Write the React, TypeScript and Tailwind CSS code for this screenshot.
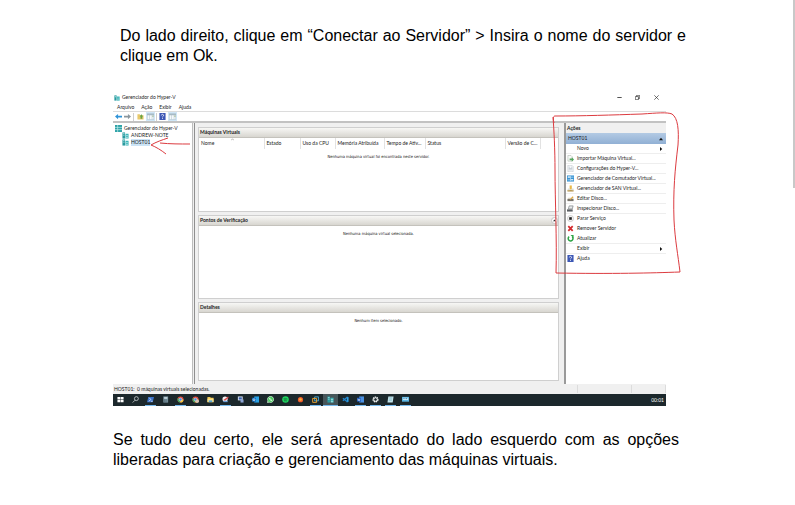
import type { ReactNode } from "react";

function Icon({ size = "size-[7px]", children }: { size?: string; children: ReactNode }) {
  return (
    <svg viewBox="0 0 16 16" className={`${size} shrink-0`} aria-hidden="true">
      {children}
    </svg>
  );
}

const server = (
  <>
    <path d="M1 1h6v14H1z" fill="#2a9a9f" />
    <path d="M8 4h7v11H8z" fill="#3db5b8" />
    <path d="M2 3h4v2H2zM2 7h4v1H2zM9 7h2v2H9zM12 7h2v2h-2zM9 11h2v3H9zM12 11h2v3h-2z" fill="#a5dfe0" />
  </>
);

const help = (
  <>
    <path d="M1 0h14v16H1z" fill="#3c57b5" />
    <path d="M5.500 5.500a2.500 2.500 0 1 1 3.500 2.300c-.8.500-1 .8-1 2M8 11.500v2" fill="none" stroke="#fff" strokeWidth="1.800" />
  </>
);

const panelIcon = (
  <>
    <path d="M0 1h16v14H0z" fill="#a7bac5" />
    <path d="M1 5h4v9H1zM6 5h5v9H6zM12 5h3v9h-3z" fill="#f5f9fb" />
    <path d="M12 6h3v2h-3z" fill="#7fa55d" />
  </>
);

type Action = { label: string; icon?: ReactNode; submenu?: boolean; line?: boolean };

const actions: Action[] = [
  { label: "Novo", submenu: true, line: true },
  {
    label: "Importar Máquina Virtual...",
    line: true,
    icon: (
      <>
        <path d="M2 1h7l3 3v10H2z" fill="#f8f9f8" stroke="#93a396" />
        <path d="M6 8h5V5l5 5.500-5 5V12H6z" fill="#53a45d" />
      </>
    ),
  },
  {
    label: "Configurações do Hyper-V...",
    line: true,
    icon: (
      <>
        <path d="M2 .5h9l3 3v12H2z" fill="#fafbfc" stroke="#a4acb5" />
        <path d="M4 5h3M9 5h3M4 8h8M4 11h8" stroke="#8797aa" />
      </>
    ),
  },
  {
    label: "Gerenciador de Comutador Virtual...",
    line: true,
    icon: (
      <>
        <path d="M0 1h16v14H0z" fill="#3a94d3" />
        <path d="M1 5h14M1 11h14M8 2v12" stroke="#c5e4f6" strokeWidth="1.500" />
        <path d="M3 3h3v3H3zM10 9h3v3h-3z" fill="#fff" />
      </>
    ),
  },
  {
    label: "Gerenciador de SAN Virtual...",
    line: true,
    icon: (
      <>
        <path d="M6 1h5v9H6z" fill="#e9b94a" />
        <path d="M1 11h14v4H1z" fill="#b99a55" />
        <path d="M2 8h4v4H2zM11 8h4v4h-4z" fill="#d9ddd9" />
      </>
    ),
  },
  {
    label: "Editar Disco...",
    line: true,
    icon: (
      <>
        <path d="M1 9h14v5H1z" fill="#77736b" />
        <path d="M3 6h11l1 3H1z" fill="#d9d2c0" />
        <path d="M6 10l7-7 2 2-7 6z" fill="#e0a73b" />
      </>
    ),
  },
  {
    label: "Inspecionar Disco...",
    line: true,
    icon: (
      <>
        <path d="M0 10h13v5H0z" fill="#595d61" />
        <path d="M5 2h9l-2 7H3z" fill="#e7eaec" stroke="#73787c" strokeWidth="1.500" />
      </>
    ),
  },
  {
    label: "Parar Serviço",
    icon: (
      <>
        <circle cx="8" cy="8" r="7" fill="#f4f4f4" stroke="#a0a0a0" />
        <path d="M5 5h6v6H5z" fill="#222" />
      </>
    ),
  },
  { label: "Remover Servidor", icon: <path d="M3 2.500l10 11M13 2.500l-10 11" stroke="#d42a2e" strokeWidth="4" /> },
  {
    label: "Atualizar",
    line: true,
    icon: (
      <>
        <path d="M5 3.500a5.500 5.500 0 1 0 7 .5" fill="none" stroke="#2ba343" strokeWidth="3.500" />
        <path d="M8 0h7v7z" fill="#2ba343" />
      </>
    ),
  },
  { label: "Exibir", submenu: true, line: true },
  { label: "Ajuda", icon: help },
];

type Task = { label: string; open?: boolean; active?: boolean; icon: ReactNode };

const chrome = (
  <>
    <circle cx="8" cy="8" r="7" fill="#dd4b3e" />
    <path d="M8 8L2 4.500A7 7 0 0 0 7.500 15z" fill="#3da75a" />
    <path d="M8 8h7a7 7 0 0 1-7.500 7z" fill="#f3c63b" />
    <circle cx="8" cy="8" r="3.300" fill="#4a86e0" stroke="#fff" />
  </>
);

const tasks: Task[] = [
  { label: "Iniciar", icon: <path d="M1 2h6v5.500H1zM8 2h7v5.500H8zM1 8.500h6V14H1zM8 8.500h7V14H8z" fill="#fff" /> },
  {
    label: "Pesquisar",
    icon: (
      <g fill="none" stroke="#e3e8e9" strokeWidth="1.600">
        <circle cx="10" cy="6" r="4.500" />
        <path d="M7 9.500L1.500 15" />
      </g>
    ),
  },
  {
    label: "PowerShell",
    open: true,
    icon: (
      <>
        <path d="M3 2h13l-3 12H0z" fill="#3b72c8" />
        <path d="M5 4l4 4-5 4M9 12h4" fill="none" stroke="#fff" strokeWidth="1.500" />
      </>
    ),
  },
  {
    label: "Calculadora",
    icon: (
      <>
        <path d="M3 1h11v14H3z" fill="#7e98a5" />
        <path d="M5 3h7v3H5z" fill="#d9e4e9" />
        <path d="M5 9h7M5 12h7" stroke="#33464f" strokeDasharray="2 1" strokeWidth="1.500" />
      </>
    ),
  },
  { label: "Chrome", open: true, icon: chrome },
  {
    label: "Chrome, perfil 2",
    icon: (
      <>
        {chrome}
        <circle cx="12" cy="12" r="4" fill="#d7c3b5" />
      </>
    ),
  },
  {
    label: "Explorador de Arquivos",
    icon: (
      <>
        <path d="M1 2h6l2 2h6v10H1z" fill="#efc64f" />
        <path d="M1 6h14v8H1z" fill="#fbe28d" />
        <path d="M4 10h8v4H4z" fill="#57a5d7" />
      </>
    ),
  },
  {
    label: "Captura",
    open: true,
    icon: (
      <>
        <circle cx="7" cy="7" r="6" fill="#f1f1f2" />
        <path d="M3 9l11-8 1 3-8 7z" fill="#dc4b4b" />
        <path d="M3 11h10v3H3z" fill="#6aa1d9" />
      </>
    ),
  },
  {
    label: "Área de Trabalho Remota",
    icon: (
      <>
        <path d="M2 1h11v9H2z" fill="#dce6f5" />
        <path d="M4 3h7v5H4z" fill="#395fae" />
        <path d="M8 8h7v7H8z" fill="#8da5d5" />
      </>
    ),
  },
  {
    label: "Outlook",
    icon: (
      <>
        <path d="M5 1h11v14H5z" fill="#29a2e5" />
        <path d="M0 4h9v9H0z" fill="#1268b8" />
        <circle cx="4.500" cy="8.500" r="2.200" fill="none" stroke="#fff" strokeWidth="1.500" />
      </>
    ),
  },
  {
    label: "WhatsApp",
    icon: (
      <>
        <path d="M1 15l1-4a7 7 0 1 1 3 3z" fill="#4bc95f" stroke="#e7f7e9" strokeWidth="1.500" />
        <path d="M5 5c0 3 3 6 6 6l1-2-2-1-1 1-2-2 1-1-1-2z" fill="#fff" />
      </>
    ),
  },
  {
    label: "Spotify",
    icon: (
      <>
        <circle cx="8" cy="8" r="7.500" fill="#1ed760" />
        <path d="M3.500 6c3-1 6-.6 9 1M4 8.700c3-.8 5-.4 7.500 1M4.500 11c2-.5 4-.3 6 .8" fill="none" stroke="#123c22" strokeWidth="1.200" />
      </>
    ),
  },
  {
    label: "Firefox",
    icon: (
      <>
        <circle cx="8" cy="8.500" r="6" fill="#ee5b2c" />
        <circle cx="8" cy="8" r="3" fill="#f9b93b" />
      </>
    ),
  },
  {
    label: "VMware",
    open: true,
    icon: (
      <g fill="none" strokeWidth="2.200">
        <path d="M6 2h9v9H6z" stroke="#45a3cf" />
        <path d="M1.500 5.500h9v9h-9z" stroke="#e4a234" />
      </g>
    ),
  },
  { label: "Gerenciador do Hyper-V", open: true, active: true, icon: server },
  {
    label: "Visual Studio Code",
    icon: (
      <>
        <path d="M11 1l4 2v10l-4 2z" fill="#2c9fe6" />
        <path d="M12 3L2 11M12 13L2 5" stroke="#2383c9" strokeWidth="3" />
      </>
    ),
  },
  {
    label: "Word",
    open: true,
    icon: (
      <>
        <path d="M5 1h11v14H5z" fill="#4b91e2" />
        <path d="M0 4h9v9H0z" fill="#1b57b5" />
        <path d="M2 6l1 5 1.500-4L6 11l1-5" fill="none" stroke="#fff" />
      </>
    ),
  },
  {
    label: "Configurações",
    open: true,
    icon: (
      <>
        <circle cx="8" cy="8" r="5.500" fill="none" stroke="#f0f3f3" strokeWidth="3" strokeDasharray="3 1.300" />
        <circle cx="8" cy="8" r="4" fill="none" stroke="#f0f3f3" strokeWidth="2" />
      </>
    ),
  },
  {
    label: "Bloco de Notas",
    open: true,
    icon: (
      <>
        <path d="M3 1h12l-2 14H1z" fill="#c3e3ea" />
        <path d="M5 4h7M4.500 7h7M4 10h7" stroke="#6ba7b7" />
      </>
    ),
  },
  {
    label: "Conexão",
    open: true,
    icon: (
      <>
        <path d="M0 2h16v11H0z" fill="#5bb5e3" />
        <path d="M2 4h12v5H2z" fill="#d8f0fb" />
        <path d="M3 6h3M8 6h4" stroke="#2775a6" strokeWidth="2" />
      </>
    ),
  },
];

const emptyText = "text-center font-['DejaVu_Sans_Condensed','Liberation_Sans',sans-serif] text-[4px] text-[#111]";

function Group({ title, size, collapse, children }: { title: string; size: string; collapse?: boolean; children: ReactNode }) {
  return (
    <section className={`${size} flex grow flex-col border border-[#cfcfcf] bg-white`}>
      <div className="flex h-[10px] items-center justify-between border-b border-[#c4c2bc] bg-linear-to-b from-[#f7f7f5] to-[#d8d6d0] pl-px">
        <h2 className="font-bold text-[#222]">{title}</h2>
        {collapse && (
          <button aria-label="Recolher" className="flex size-[7px] items-center justify-center rounded-full border border-[#c5c5c5] bg-white">
            <Icon size="size-[3px]">
              <path d="M0 12l8-9 8 9z" fill="#333" />
            </Icon>
          </button>
        )}
      </div>
      {children}
    </section>
  );
}

const columns = [
  { label: "Nome", width: "w-[65px]", sorted: true },
  { label: "Estado", width: "w-[36px]" },
  { label: "Uso da CPU", width: "w-[35px]" },
  { label: "Memória Atribuída", width: "w-[49px]" },
  { label: "Tempo de Ativ...", width: "w-[41px]" },
  { label: "Status", width: "w-auto" },
  { label: "Versão de C...", width: "w-[35px]" },
];

function Toolbar() {
  return (
    <div className="flex h-[10px] items-center border-t border-[#dcdcdc] bg-white pl-[2px]">
      <button aria-label="Voltar" className="w-[9px]">
        <Icon>
          <path d="M0 8l7-6v4h9v4H7v4z" fill="#2f93d8" />
        </Icon>
      </button>
      <button aria-label="Avançar" className="w-[9px]">
        <Icon>
          <path d="M16 8L9 2v4H0v4h9v4z" fill="#8b979e" />
        </Icon>
      </button>
      <span className="mr-[3px] h-[8px] w-px bg-[#cfcfcf]" />
      <button aria-label="Acima" className="w-[9px]">
        <Icon>
          <path d="M1 3h5l2 2h7v10H1z" fill="#e8c96b" />
          <path d="M8 13V8H6l4-5 4 5h-2v5z" fill="#67a348" />
        </Icon>
      </button>
      <button aria-label="Árvore de console" className="flex h-[9px] w-[9px] items-center justify-center bg-[#cfe6f7]">
        <Icon>{panelIcon}</Icon>
      </button>
      <span className="mr-[2px] ml-px h-[8px] w-px bg-[#cfcfcf]" />
      <button aria-label="Ajuda" className="w-[9px]">
        <Icon>{help}</Icon>
      </button>
      <button aria-label="Painel de ações" className="flex h-[9px] w-[9px] items-center justify-center bg-[#cfe6f7]">
        <Icon>{panelIcon}</Icon>
      </button>
    </div>
  );
}

function Tree() {
  return (
    <nav aria-label="Console" className="flex w-[80px] shrink-0 flex-col border-r border-[#bdbdbd] bg-white pt-[2px] pl-[2px]">
      <button className="flex h-[7px] items-center gap-[2px]">
        <Icon>
          <path d="M0 0h16v16H0z" fill="#2fa3a8" />
          <path d="M0 5.500h16M0 10.500h16M6 0v16" stroke="#c3ecec" strokeWidth="1.500" />
        </Icon>
        Gerenciador do Hyper-V
      </button>
      {["ANDREW-NOTE", "HOST01"].map((name) => (
        <button key={name} className="flex h-[7px] items-center gap-[2px] pl-[7px]">
          <Icon>{server}</Icon>
          <span className={name === "HOST01" ? "bg-[#cce4f6]" : ""}>{name}</span>
        </button>
      ))}
    </nav>
  );
}

function ActionsPane() {
  return (
    <aside className="flex w-[102px] shrink-0 flex-col border-l-2 border-[#9a9a9a] bg-white">
      <h2 className="h-[10px] bg-[#f0f0f0] pt-[2px] pl-px font-bold text-[#222]">Ações</h2>
      <button className="flex h-[11px] items-center justify-between bg-linear-to-b from-[#b3cae4] to-[#91b0d4] pr-[3px] pl-[2px]">
        HOST01
        <Icon size="size-[4px]">
          <path d="M0 13l8-10 8 10z" fill="#111" />
        </Icon>
      </button>
      <ul>
        {actions.map((a) => (
          <li key={a.label} className={`h-[10px] border-b ${a.line ? "border-[#eeeeee]" : "border-transparent"}`}>
            <button className="flex h-full w-full items-center pr-[3px] pl-px">
              <span className="flex w-[10px]">{a.icon && <Icon>{a.icon}</Icon>}</span>
              <span className="whitespace-nowrap">{a.label}</span>
              {a.submenu && (
                <span className="ml-auto">
                  <Icon size="size-[4px]">
                    <path d="M4 0l9 8-9 8z" fill="#111" />
                  </Icon>
                </span>
              )}
            </button>
          </li>
        ))}
      </ul>
    </aside>
  );
}

function ManagerWindow() {
  return (
    <div className="bg-[#f0f0f0] font-['Lato','Open_Sans',sans-serif] text-[5px] leading-[7px] text-[#1c1c1c]">
      <header className="flex h-[11px] items-center gap-[2px] bg-white pl-px">
        <Icon size="size-[6px]">{server}</Icon>
        <h1>Gerenciador do Hyper-V</h1>
        <div className="ml-auto flex">
          <button aria-label="Minimizar" className="flex w-[18px] justify-center">
            <Icon size="size-[5px]">
              <path d="M1 8h14" stroke="#222" strokeWidth="2.500" />
            </Icon>
          </button>
          <button aria-label="Restaurar" className="flex w-[19px] justify-center">
            <Icon size="size-[5px]">
              <path d="M1 5h10v10H1zM5 5V1h10v10h-4" fill="none" stroke="#222" strokeWidth="2" />
            </Icon>
          </button>
          <button aria-label="Fechar" className="flex w-[19px] justify-center">
            <Icon size="size-[5px]">
              <path d="M1 1l14 14M15 1L1 15" stroke="#222" strokeWidth="2" />
            </Icon>
          </button>
        </div>
      </header>
      <nav aria-label="Menu" className="flex h-[8px] items-center gap-[7px] bg-white pl-1">
        {["Arquivo", "Ação", "Exibir", "Ajuda"].map((m) => (
          <button key={m}>{m}</button>
        ))}
      </nav>
      <Toolbar />
      <div className="flex min-h-[263px] border-t-2 border-[#c2c2c2]">
        <Tree />
        <div className="ml-px flex flex-1 flex-col gap-[3px] border-l border-[#8f8f8f] pt-1 pr-[5px] pb-[3px] pl-[3px]">
          <Group title="Máquinas Virtuais" size="min-h-[84px]">
            <table className="w-full table-fixed text-left">
              <thead>
                <tr className="h-[11px]">
                  {columns.map((c) => (
                    <th
                      key={c.label}
                      scope="col"
                      aria-sort={c.sorted ? "ascending" : undefined}
                      className={`${c.width} relative border-r border-[#e2e2e2] p-0 pl-[2px] font-normal whitespace-nowrap`}
                    >
                      {c.label}
                      {c.sorted && (
                        <span className="absolute top-0 left-1/2">
                          <Icon size="size-[3px]">
                            <path d="M0 13l8-9 8 9" fill="none" stroke="#888" strokeWidth="3" />
                          </Icon>
                        </span>
                      )}
                    </th>
                  ))}
                  <td className="w-[18px]" />
                </tr>
              </thead>
              <tbody>
                <tr>
                  <td colSpan={8} className={`pt-1 ${emptyText}`}>
                    Nenhuma máquina virtual foi encontrada neste servidor.
                  </td>
                </tr>
              </tbody>
            </table>
          </Group>
          <Group title="Pontos de Verificação" size="min-h-[84px]" collapse>
            <p className={`pt-1 ${emptyText}`}>Nenhuma máquina virtual selecionada.</p>
          </Group>
          <Group title="Detalhes" size="min-h-[79px]">
            <p className={`pt-1 ${emptyText}`}>Nenhum item selecionado.</p>
          </Group>
        </div>
        <ActionsPane />
      </div>
      <footer className="flex h-[10px] items-center pl-px">
        <span>HOST01:&nbsp; 0 máquinas virtuais selecionadas.</span>
        <span className="ml-auto h-[8px] w-[54px] border-l border-[#dcdcdc]" />
        <span className="h-[8px] w-[35px] border-x border-[#dcdcdc]" />
      </footer>
      <div className="flex h-3 items-center bg-[#1c282c] pr-[2px] text-white">
        {tasks.map((t) => (
          <button
            key={t.label}
            aria-label={t.label}
            className={`flex h-full w-[15px] flex-col items-center justify-between pt-[2px] ${t.active ? "bg-[#47565a]" : ""}`}
          >
            <Icon>{t.icon}</Icon>
            <span className={`h-px ${t.active ? "w-full" : "w-[11px]"} ${t.open ? "bg-[#76b9ed]" : ""}`} />
          </button>
        ))}
        <time className="ml-auto">00:01</time>
      </div>
    </div>
  );
}

export default function App() {
  return (
    <div className="relative bg-white font-['Liberation_Sans',Arial,sans-serif]">
      <div className="absolute top-0 right-0 h-[188px] w-[2px] bg-[#c8c8c8]" />
      <main className="pt-[26px] pr-[109px] pl-[113px] text-base leading-5 text-black">
        <p className="pl-[7px] text-justify">
          Do lado direito, clique em “Conectar ao Servidor” &gt; Insira o nome do servidor e clique em Ok.
        </p>
        <figure className="relative mt-[26px] mr-5">
          <ManagerWindow />
          <svg viewBox="0 0 44 20" className="absolute top-[44px] left-[37px] h-5 w-[44px]" fill="none" stroke="#dc3b40" aria-hidden="true">
            <path d="M18 2C12 4 6 6 1 9c5 2 10 5 15 9M10 7c10 1 20 1 30 1" />
          </svg>
          <svg viewBox="0 0 130 170" className="absolute top-[18px] -right-[16px] h-[170px] w-[130px]" fill="none" stroke="#dc3b40" aria-hidden="true">
            <path d="M2 13C1 9 1 6 3 6 30 6 60 5 90 4c15-1 25-2 30 0 6 4 7 16 6 31-3 25-5 45-4 75 1 20 4 35 6 52-28 1-68 2-124 1C5 130 3 90 3 60 3 40 2 20 1 7" />
          </svg>
        </figure>
        <p className="mt-6 pr-[7px] text-justify">
          Se tudo deu certo, ele será apresentado do lado esquerdo com as opções liberadas para criação e gerenciamento das máquinas virtuais.
        </p>
      </main>
    </div>
  );
}
